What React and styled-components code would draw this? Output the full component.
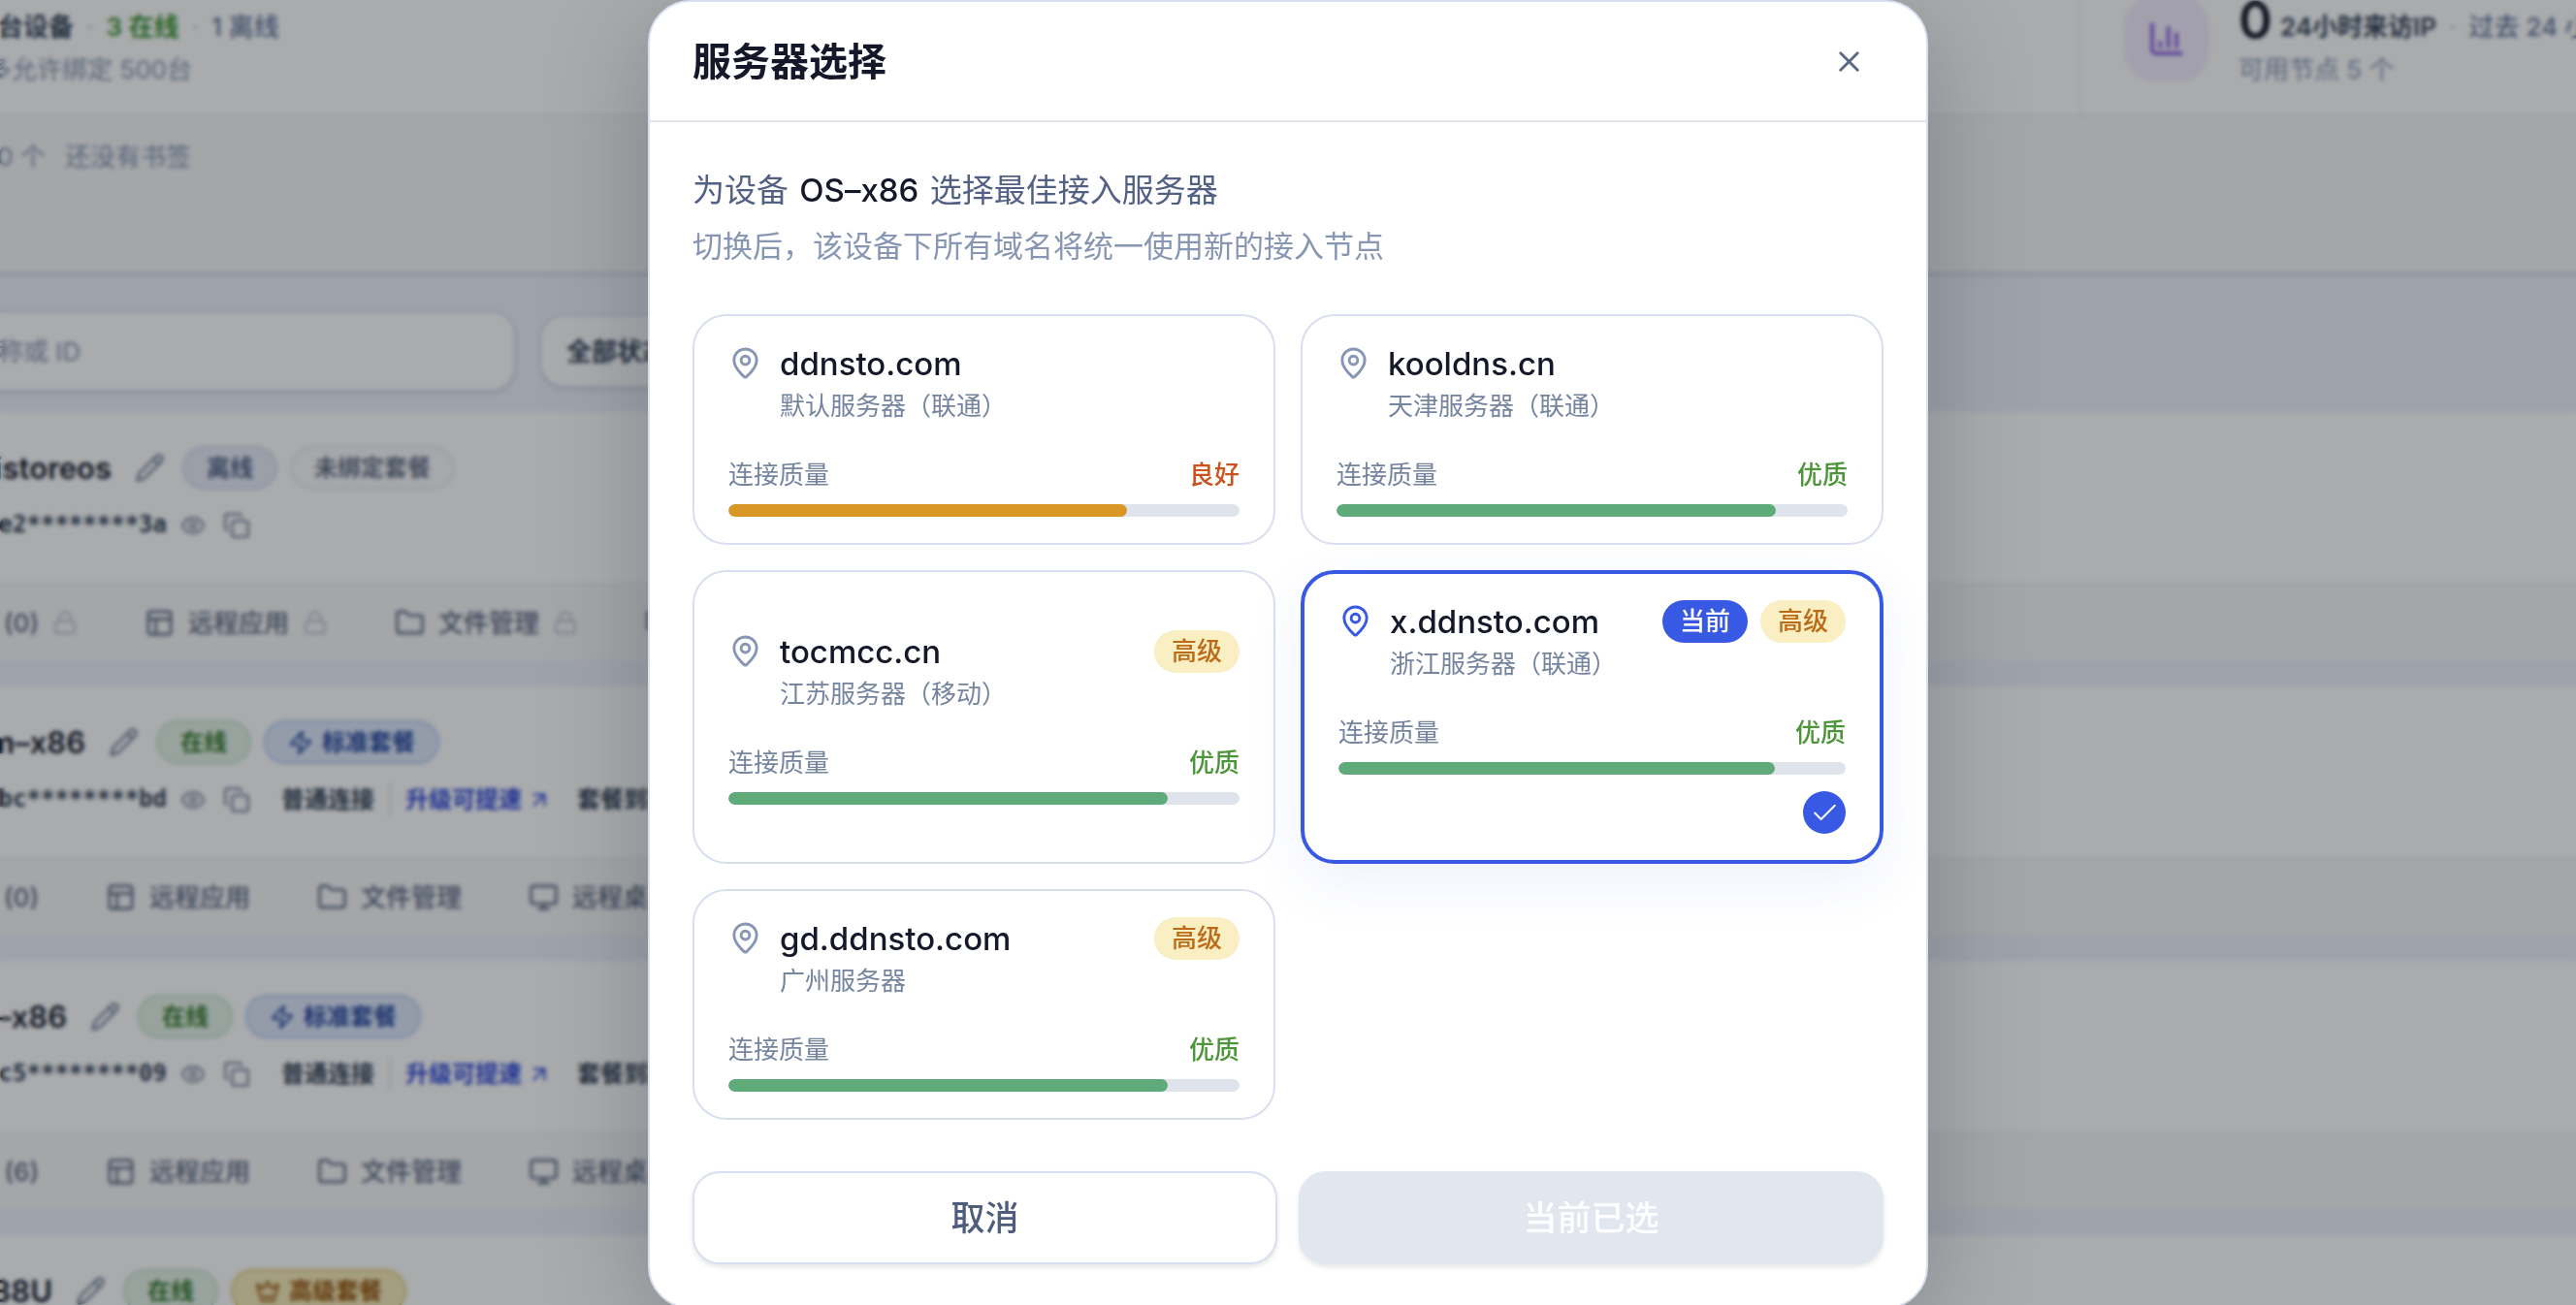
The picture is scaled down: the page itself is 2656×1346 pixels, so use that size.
import { useState } from 'react'
import styled, { createGlobalStyle, css } from 'styled-components'
import {
  ArrowUpRight,
  ChartColumn,
  Check,
  Copy,
  Crown,
  Eye,
  Folder,
  Lock,
  MapPin,
  Monitor,
  PanelsTopLeft,
  Pencil,
  X,
  Zap,
} from 'lucide-react'

const GlobalStyle = createGlobalStyle`
  :root {
    --color-primary: #3859e3;
    --color-ink: #141828;
    --color-text: #526183;
    --color-text-muted: #75849f;
    --color-text-light: #8796b2;
    --color-border: #d9dff0;
    --color-track: #dfe3ec;
    --color-page: #eff2fc;
    --color-panel: #f7f7f8;
    --color-success: #4c9539;
    --color-warning: #c9531b;
  }

  * {
    box-sizing: border-box;
  }

  body {
    margin: 0;
    font-family: Inter, 'Noto Sans CJK SC', sans-serif;
    font-size: 26px;
    line-height: 35px;
    color: var(--color-ink);
    background-color: var(--color-page);
  }

  button, input, select {
    font: inherit;
    color: inherit;
  }
`

/* ---------- page behind the dialog ---------- */

const Viewport = styled.div`
  height: 100vh;
  overflow: hidden;
  background-color: var(--color-page);
`

// the list is scrolled a little
const Page = styled.main`
  margin-top: -38px;
  white-space: nowrap;
`

const Overview = styled.section`
  display: flex;
  background-color: #fff;
  border-bottom: 2px solid #f1f2f6;
`

const StatCell = styled.div`
  display: flex;
  align-items: center;
  gap: 30px;
  height: 156px;
  ${({ $side }) =>
    $side
      ? css`
          width: 512px;
          padding-left: 44px;
          border-left: 2px solid #f1f2f6;
        `
      : css`
          flex: 1;
        `}
`

const StatIcon = styled.div`
  display: flex;
  flex-shrink: 0;
  align-items: center;
  justify-content: center;
  width: 88px;
  height: 88px;
  border-radius: 31px;
  color: #7c4fe0;
  background-color: #f5effd;
`

const StatText = styled.div`
  display: flex;
  flex-direction: column;
  gap: 9px;
`

const StatLine = styled.div`
  display: flex;
  align-items: flex-end;
  gap: 8px;
  height: 54px;
`

const StatNumber = styled.strong`
  font-size: 53px;
  line-height: 48px;
  font-weight: 600;
  color: var(--color-ink);
`

const StatLabel = styled.span`
  font-weight: ${({ $strong }) => ($strong ? 600 : 500)};
  color: ${({ $tone }) => $tone || '#334155'};
`

const Dot = styled.span`
  padding: 0 5px;
  color: #c3cad9;
`

const Hint = styled.div`
  color: var(--color-text-light);
`

// keeps the end of a text when its column is narrower than the text
const Tail = styled.div`
  display: flex;
  flex-shrink: 0;
  justify-content: flex-end;
  width: ${({ $width }) => $width}px;
`

const Bookmarks = styled.section`
  display: flex;
  gap: 20px;
  height: 162px;
  padding-top: 24px;
  color: var(--color-text-light);
  background-color: var(--color-panel);
  border-bottom: 2px solid #dfe1ee;
  box-shadow: 0 2px 4px rgba(15, 23, 42, 0.12);
`

const Filters = styled.div`
  display: flex;
  align-items: center;
  gap: 24px;
  padding: 38px 0 21px;
`

const SearchInput = styled.input`
  width: 554px;
  height: 84px;
  margin-left: -22px;
  padding: 0 18px;
  border: 2px solid var(--color-border);
  border-radius: 26px;
  background-color: #fff;
  box-shadow: 0 2px 4px rgba(15, 23, 42, 0.12);

  &::placeholder {
    color: var(--color-text-light);
    opacity: 1;
  }
`

const StatusSelect = styled.select`
  appearance: none;
  width: 240px;
  height: 76px;
  padding: 0 26px;
  border: 2px solid var(--color-border);
  border-radius: 26px;
  font-weight: 600;
  color: #334155;
  background-color: #fff;
  box-shadow: 0 2px 4px rgba(15, 23, 42, 0.12);
`

const DeviceList = styled.div`
  display: flex;
  flex-direction: column;
  gap: 27px;
`

const DeviceCard = styled.article`
  background-color: #fff;
`

const DeviceBody = styled.div`
  display: flex;
  flex-direction: column;
  gap: 19px;
  height: 176px;
  padding-top: 35px;
`

const DeviceRow = styled.div`
  display: flex;
  align-items: center;
`

const DeviceName = styled(Tail)`
  margin-right: 24px;
  font-size: 31px;
  line-height: 44px;
  font-weight: 600;
`

const IconButton = styled.button`
  display: flex;
  flex-shrink: 0;
  margin: 0 18px 0 0;
  padding: 0;
  border: none;
  color: #75809a;
  background: none;
  cursor: pointer;
`

const chipTones = {
  offline: ['#526488', '#e8edf8', '#d3dbee'],
  none: ['#667085', '#fafafc', '#e9ebf1'],
  online: ['#357a2b', '#e6f3e8', '#c4e2cb'],
  standard: ['#2848a0', '#dfe9fb', '#b3cbf7'],
  premium: ['#965208', '#f8edbb', '#e5cd74'],
}

const Chip = styled.span`
  display: flex;
  align-items: center;
  gap: 9px;
  height: 45px;
  margin-right: 13px;
  padding: 0 23px;
  border: 2px solid ${({ $tone }) => chipTones[$tone][2]};
  border-radius: 23px;
  font-size: 24px;
  font-weight: 600;
  color: ${({ $tone }) => chipTones[$tone][0]};
  background-color: ${({ $tone }) => chipTones[$tone][1]};
`

const DeviceId = styled(Tail)`
  margin-right: 14px;
  font-family: 'DejaVu Sans Mono', monospace;
  font-size: 24px;
  font-weight: 700;
  color: #334155;
`

const LinkInfo = styled.div`
  display: flex;
  align-items: center;
  gap: 15px;
  margin-left: 14px;
  font-size: 24px;
  font-weight: 600;
  color: #334155;
`

const UpgradeLink = styled.a`
  display: flex;
  align-items: center;
  gap: 5px;
  margin-right: 11px;
  padding-left: 15px;
  border-left: 2px solid #dfe3ec;
  color: #2f49d8;
  text-decoration: none;
`

const DeviceTabs = styled.nav`
  display: flex;
  align-items: center;
  gap: 69px;
  height: 80px;
  color: #5b6780;
  background-color: var(--color-panel);
  border-top: 2px solid #f0f1f5;
`

const Tab = styled.button`
  display: flex;
  align-items: center;
  gap: 14px;
  padding: 0;
  border: none;
  font-weight: 500;
  background: none;
  cursor: pointer;

  .lock {
    color: #bfc6d4;
  }
`

/* ---------- dialog ---------- */

const Overlay = styled.div`
  position: fixed;
  inset: 0;
  display: flex;
  align-items: flex-start;
  justify-content: center;
  overflow: hidden;
  background-color: rgba(10, 13, 20, 0.35);
  backdrop-filter: blur(2px);
`

const Dialog = styled.div`
  width: 1320px;
  max-width: 100%;
  border: 2px solid var(--color-border);
  border-radius: 44px;
  background-color: #fff;
  box-shadow: 0 24px 110px rgba(10, 13, 20, 0.22);
`

const DialogHeader = styled.header`
  display: flex;
  align-items: center;
  justify-content: space-between;
  height: 124px;
  padding: 0 44px;
  border-bottom: 2px solid #e3e5ee;
`

const DialogTitle = styled.h2`
  margin: 0;
  font-size: 40px;
  line-height: 53px;
  font-weight: 600;
`

const CloseButton = styled.button`
  display: flex;
  padding: 18px;
  border: none;
  border-radius: 18px;
  color: #5a6885;
  background: none;
  cursor: pointer;
`

const DialogBody = styled.div`
  padding: 44px;
`

const Lead = styled.p`
  margin: 0;
  font-size: 33px;
  line-height: 53px;
  color: var(--color-text);

  strong {
    padding: 0 2px;
    font-weight: 500;
    color: var(--color-ink);
  }
`

const Note = styled.p`
  margin: 4px 0 44px;
  font-size: 31px;
  line-height: 53px;
  color: var(--color-text-light);
`

const ServerGrid = styled.div`
  display: grid;
  grid-template-columns: 1fr 1fr;
  gap: 26px;
`

const ServerCard = styled.button`
  display: flex;
  flex-direction: column;
  justify-content: center;
  padding: 27px 35px;
  border: ${({ $selected }) => ($selected ? '4px solid var(--color-primary)' : '2px solid var(--color-border)')};
  border-radius: 35px;
  text-align: left;
  background-color: #fff;
  box-shadow: ${({ $selected }) => ($selected ? '0 20px 60px rgba(56, 89, 227, 0.08)' : 'none')};
  cursor: pointer;
`

const ServerHead = styled.div`
  display: flex;
  align-items: flex-start;
  gap: 18px;
  margin-bottom: 36px;
`

const Pin = styled(MapPin)`
  flex-shrink: 0;
  margin-top: 4px;
  color: ${({ $selected }) => ($selected ? 'var(--color-primary)' : 'var(--color-text-light)')};
`

const ServerTitle = styled.div`
  flex: 1;
`

const ServerName = styled.div`
  font-size: 33px;
  line-height: 44px;
  font-weight: 500;
`

const ServerRegion = styled.div`
  margin-top: 4px;
  color: var(--color-text-muted);
`

const Badges = styled.div`
  display: flex;
  gap: 13px;
`

const Badge = styled.span`
  padding: 0 18px;
  border-radius: 22px;
  line-height: 44px;
  font-weight: 500;
  color: ${({ $current }) => ($current ? '#fff' : '#bd6b16')};
  background-color: ${({ $current }) => ($current ? 'var(--color-primary)' : '#f9efc3')};
`

const Quality = styled.div`
  display: flex;
  justify-content: space-between;
  margin-bottom: 13px;
  color: var(--color-text-muted);
`

const QualityValue = styled.span`
  font-weight: 500;
  color: ${({ $good }) => ($good ? 'var(--color-warning)' : 'var(--color-success)')};
`

const Track = styled.div`
  height: 13px;
  border-radius: 7px;
  overflow: hidden;
  background-color: var(--color-track);
`

const Fill = styled.div`
  height: 100%;
  border-radius: 7px;
  background-color: ${({ $good }) => ($good ? '#d99727' : '#5eab79')};
`

const Tick = styled.span`
  display: flex;
  align-items: center;
  justify-content: center;
  align-self: flex-end;
  width: 44px;
  height: 44px;
  margin-top: 17px;
  border-radius: 50%;
  color: #fff;
  background-color: var(--color-primary);
`

const Actions = styled.div`
  display: grid;
  grid-template-columns: 1fr 1fr;
  gap: 22px;
  margin-top: 53px;
`

const ActionButton = styled.button`
  height: 96px;
  border: 2px solid var(--color-border);
  border-radius: 28px;
  font-size: 35px;
  font-weight: 500;
  color: #4e5d7c;
  background-color: #fff;
  box-shadow: 0 3px 5px rgba(15, 23, 42, 0.1);
  cursor: pointer;

  &:disabled {
    border-color: #e2e6ee;
    color: #fff;
    background-color: #e2e6ee;
    cursor: not-allowed;
  }
`

const servers = [
  { host: 'ddnsto.com', region: '默认服务器（联通）', quality: '良好', score: 78 },
  { host: 'kooldns.cn', region: '天津服务器（联通）', quality: '优质', score: 86 },
  { host: 'tocmcc.cn', region: '江苏服务器（移动）', quality: '优质', score: 86, premium: true },
  { host: 'x.ddnsto.com', region: '浙江服务器（联通）', quality: '优质', score: 86, premium: true },
  { host: 'gd.ddnsto.com', region: '广州服务器', quality: '优质', score: 86, premium: true },
]

const currentHost = 'x.ddnsto.com'

const devices = [
  { name: 'istoreos', nameWidth: 115, id: 'e2********3a', domains: 0, plan: 'none' },
  { name: 'm–x86', nameWidth: 88, id: 'bc********bd', domains: 0, plan: 'standard' },
  { name: '–x86', nameWidth: 69, id: 'c5********09', domains: 6, plan: 'standard' },
  { name: '88U', nameWidth: 54, id: '', domains: 0, plan: 'premium' },
]

const plans = {
  none: { label: '未绑定套餐' },
  standard: { label: '标准套餐', Icon: Zap },
  premium: { label: '高级套餐', Icon: Crown },
}

function Device({ device }) {
  const { label, Icon } = plans[device.plan]
  const locked = device.plan === 'none'
  const lock = locked && <Lock className="lock" size={26} />

  return (
    <DeviceCard>
      <DeviceBody>
        <DeviceRow>
          <DeviceName $width={device.nameWidth}>{device.name}</DeviceName>
          <IconButton aria-label="重命名">
            <Pencil size={31} />
          </IconButton>
          <Chip $tone={locked ? 'offline' : 'online'}>{locked ? '离线' : '在线'}</Chip>
          <Chip $tone={device.plan}>
            {Icon && <Icon size={26} />}
            {label}
          </Chip>
        </DeviceRow>
        {device.id && (
          <DeviceRow>
            <DeviceId $width={172}>{device.id}</DeviceId>
            <IconButton aria-label="显示">
              <Eye size={26} />
            </IconButton>
            <IconButton aria-label="复制">
              <Copy size={28} />
            </IconButton>
            {!locked && (
              <LinkInfo>
                普通连接
                <UpgradeLink href="#upgrade">
                  升级可提速
                  <ArrowUpRight size={26} />
                </UpgradeLink>
                套餐到期
              </LinkInfo>
            )}
          </DeviceRow>
        )}
      </DeviceBody>
      {device.id && (
        <DeviceTabs>
          <Tab>
            <Tail $width={40}>({device.domains})</Tail>
            {lock}
          </Tab>
          <Tab>
            <PanelsTopLeft size={31} />
            远程应用
            {lock}
          </Tab>
          <Tab>
            <Folder size={31} />
            文件管理
            {lock}
          </Tab>
          <Tab>
            <Monitor size={31} />
            远程桌面
          </Tab>
        </DeviceTabs>
      )}
    </DeviceCard>
  )
}

function Server({ server, selected, onSelect }) {
  const good = server.quality === '良好'

  return (
    <ServerCard type="button" aria-pressed={selected} $selected={selected} onClick={onSelect}>
      <ServerHead>
        <Pin size={35} $selected={selected} />
        <ServerTitle>
          <ServerName>{server.host}</ServerName>
          <ServerRegion>{server.region}</ServerRegion>
        </ServerTitle>
        <Badges>
          {server.host === currentHost && <Badge $current>当前</Badge>}
          {server.premium && <Badge>高级</Badge>}
        </Badges>
      </ServerHead>
      <Quality>
        连接质量
        <QualityValue $good={good}>{server.quality}</QualityValue>
      </Quality>
      <Track>
        <Fill $good={good} style={{ width: `${server.score}%` }} />
      </Track>
      {selected && (
        <Tick>
          <Check size={31} strokeWidth={1.5} />
        </Tick>
      )}
    </ServerCard>
  )
}

function App() {
  const [selected, setSelected] = useState(currentHost)
  const unchanged = selected === currentHost

  return (
    <Viewport>
      <GlobalStyle />
      <Page>
        <Overview>
          <StatCell>
            <StatText>
              <StatLine>
                <Tail $width={76}>
                  <StatLabel $strong>台设备</StatLabel>
                </Tail>
                <Dot>·</Dot>
                <StatLabel $strong $tone="#3b9430">
                  3 在线
                </StatLabel>
                <Dot>·</Dot>
                <StatLabel $tone="#64779c">1 离线</StatLabel>
              </StatLine>
              <Tail $width={198}>
                <Hint>多允许绑定 500台</Hint>
              </Tail>
            </StatText>
          </StatCell>
          <StatCell $side>
            <StatIcon>
              <ChartColumn size={40} />
            </StatIcon>
            <StatText>
              <StatLine>
                <StatNumber>0</StatNumber>
                <StatLabel $strong>24小时来访IP</StatLabel>
                <Dot>·</Dot>
                <StatLabel $tone="#64779c">过去 24 小时</StatLabel>
              </StatLine>
              <Hint>可用节点 5 个</Hint>
            </StatText>
          </StatCell>
        </Overview>
        <Bookmarks>
          <Tail $width={47}>0 个</Tail>
          还没有书签
        </Bookmarks>
        <Filters>
          <SearchInput placeholder="称或 ID" aria-label="搜索设备" />
          <StatusSelect aria-label="状态">
            <option>全部状态</option>
          </StatusSelect>
        </Filters>
        <DeviceList>
          {devices.map((device) => (
            <Device key={device.name} device={device} />
          ))}
        </DeviceList>
      </Page>

      <Overlay>
        <Dialog role="dialog" aria-modal="true" aria-labelledby="dialog-title">
          <DialogHeader>
            <DialogTitle id="dialog-title">服务器选择</DialogTitle>
            <CloseButton type="button" aria-label="关闭">
              <X size={35} />
            </CloseButton>
          </DialogHeader>
          <DialogBody>
            <Lead>
              为设备 <strong>OS–x86</strong> 选择最佳接入服务器
            </Lead>
            <Note>切换后，该设备下所有域名将统一使用新的接入节点</Note>
            <ServerGrid>
              {servers.map((server) => (
                <Server
                  key={server.host}
                  server={server}
                  selected={server.host === selected}
                  onSelect={() => setSelected(server.host)}
                />
              ))}
            </ServerGrid>
            <Actions>
              <ActionButton type="button">取消</ActionButton>
              <ActionButton type="button" disabled={unchanged}>
                {unchanged ? '当前已选' : '确认切换'}
              </ActionButton>
            </Actions>
          </DialogBody>
        </Dialog>
      </Overlay>
    </Viewport>
  )
}

export default App
